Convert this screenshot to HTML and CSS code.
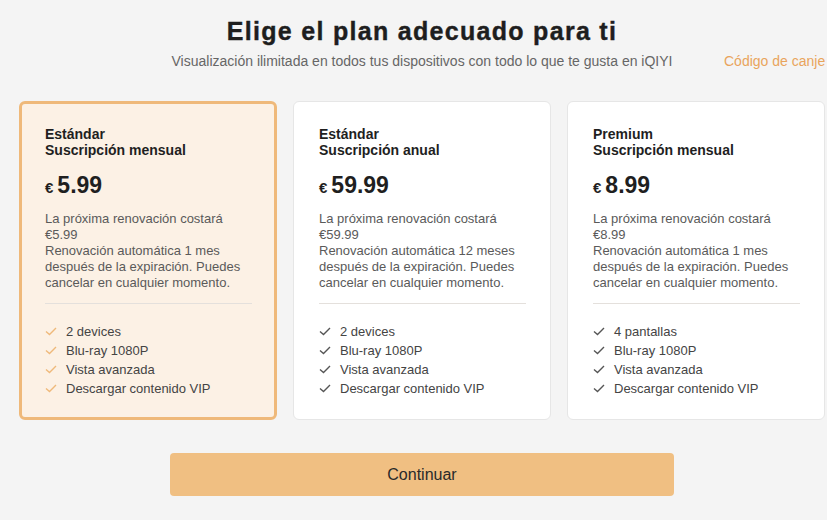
FILE: index.html
```html
<!DOCTYPE html>
<html lang="es">
<head>
<meta charset="utf-8">
<link rel="stylesheet" href="styles.css">
</head>
<body>
<div class="page">
  <header class="head">
    <h1 class="title">Elige el plan adecuado para ti</h1>
    <div class="subrow">
      <p class="subtitle">Visualización ilimitada en todos tus dispositivos con todo lo que te gusta en iQIYI</p>
      <a class="redeem">Código de canje</a>
    </div>
  </header>

  <div class="plans">
    <div class="card selected">
      <div class="name">Estándar<br>Suscripción mensual</div>
      <div class="price"><span class="cur">€</span> <span class="amt">5.99</span></div>
      <p class="desc">La próxima renovación costará €5.99<br>Renovación automática 1 mes después de la expiración. Puedes cancelar en cualquier momento.</p>
      <ul class="feats">
        <li><svg class="chk" viewBox="0 0 12 9"><path d="M1 4.5l3.5 3L11 1"/></svg>2 devices</li>
        <li><svg class="chk" viewBox="0 0 12 9"><path d="M1 4.5l3.5 3L11 1"/></svg>Blu-ray 1080P</li>
        <li><svg class="chk" viewBox="0 0 12 9"><path d="M1 4.5l3.5 3L11 1"/></svg>Vista avanzada</li>
        <li><svg class="chk" viewBox="0 0 12 9"><path d="M1 4.5l3.5 3L11 1"/></svg>Descargar contenido VIP</li>
      </ul>
    </div>
    <div class="card">
      <div class="name">Estándar<br>Suscripción anual</div>
      <div class="price"><span class="cur">€</span> <span class="amt">59.99</span></div>
      <p class="desc">La próxima renovación costará €59.99<br>Renovación automática 12 meses después de la expiración. Puedes cancelar en cualquier momento.</p>
      <ul class="feats">
        <li><svg class="chk" viewBox="0 0 12 9"><path d="M1 4.5l3.5 3L11 1"/></svg>2 devices</li>
        <li><svg class="chk" viewBox="0 0 12 9"><path d="M1 4.5l3.5 3L11 1"/></svg>Blu-ray 1080P</li>
        <li><svg class="chk" viewBox="0 0 12 9"><path d="M1 4.5l3.5 3L11 1"/></svg>Vista avanzada</li>
        <li><svg class="chk" viewBox="0 0 12 9"><path d="M1 4.5l3.5 3L11 1"/></svg>Descargar contenido VIP</li>
      </ul>
    </div>
    <div class="card">
      <div class="name">Premium<br>Suscripción mensual</div>
      <div class="price"><span class="cur">€</span> <span class="amt">8.99</span></div>
      <p class="desc">La próxima renovación costará €8.99<br>Renovación automática 1 mes después de la expiración. Puedes cancelar en cualquier momento.</p>
      <ul class="feats">
        <li><svg class="chk" viewBox="0 0 12 9"><path d="M1 4.5l3.5 3L11 1"/></svg>4 pantallas</li>
        <li><svg class="chk" viewBox="0 0 12 9"><path d="M1 4.5l3.5 3L11 1"/></svg>Blu-ray 1080P</li>
        <li><svg class="chk" viewBox="0 0 12 9"><path d="M1 4.5l3.5 3L11 1"/></svg>Vista avanzada</li>
        <li><svg class="chk" viewBox="0 0 12 9"><path d="M1 4.5l3.5 3L11 1"/></svg>Descargar contenido VIP</li>
      </ul>
    </div>
  </div>

  <div class="actions">
    <button class="continue">Continuar</button>
  </div>
</div>
</body>
</html>
```

FILE: styles.css
```css
html, body {
  margin: 0;
  padding: 0;
  background: #f4f4f4;
  overflow: hidden;
}
body {
  font-family: "Liberation Sans", Arial, sans-serif;
  color: #222;
  width: 827px;
  height: 520px;
}
.page {
  width: 806px;
  margin-left: 19px;
  display: flex;
  flex-direction: column;
}
.head {
  display: flex;
  flex-direction: column;
  align-items: center;
  padding-top: 15px;
}
.title {
  margin: 0;
  font-size: 25px;
  font-weight: 900;
  letter-spacing: 1.3px;
  -webkit-text-stroke: 0.4px #1e1e1e;
  line-height: 32px;
  color: #1e1e1e;
}
.subrow {
  position: relative;
  width: 100%;
  display: flex;
  justify-content: center;
  margin-top: 6px;
}
.subtitle {
  margin: 0;
  font-size: 14px;
  line-height: 16px;
  color: #666;
}
.redeem {
  position: absolute;
  left: 705px;
  top: 0;
  font-size: 14px;
  line-height: 16px;
  color: #e9a45c;
  white-space: nowrap;
}
.plans {
  margin-top: 32px;
  display: flex;
  gap: 16px;
}
.card {
  box-sizing: border-box;
  width: 258px;
  height: 319px;
  background: #fff;
  border: 1px solid #e6e6e6;
  border-radius: 6px;
  padding: 24px 24px 0 25px;
}
.card.selected {
  background: #fcf1e5;
  border: 3px solid #efb97a;
  padding: 22px 22px 0 23px;
}
.name {
  font-size: 14px;
  font-weight: bold;
  line-height: 16px;
  color: #1f1f1f;
}
.price {
  margin-top: 14px;
  display: flex;
  align-items: baseline;
  gap: 4px;
  color: #1f1f1f;
}
.cur {
  font-size: 15px;
  font-weight: bold;
}
.amt {
  font-size: 23px;
  font-weight: bold;
}
.desc {
  margin: 12px 0 0;
  font-size: 13px;
  line-height: 16px;
  color: #5a5a5a;
  padding-bottom: 12px;
  border-bottom: 1px solid #e4e0dc;
}
.feats {
  list-style: none;
  margin: 18px 0 0;
  padding: 0;
}
.feats li {
  display: flex;
  align-items: center;
  font-size: 13px;
  line-height: 19px;
  color: #444;
}
.chk {
  width: 12px;
  height: 9px;
  margin-right: 9px;
  fill: none;
  stroke: #555;
  stroke-width: 1.4;
}
.selected .chk {
  stroke: #efb97a;
}
.actions {
  display: flex;
  justify-content: center;
  margin-top: 33px;
}
.continue {
  width: 504px;
  height: 43px;
  border: none;
  border-radius: 4px;
  background: #f0bf82;
  color: #2a2a2a;
  font-family: "Liberation Sans", Arial, sans-serif;
  font-size: 16px;
}
```
